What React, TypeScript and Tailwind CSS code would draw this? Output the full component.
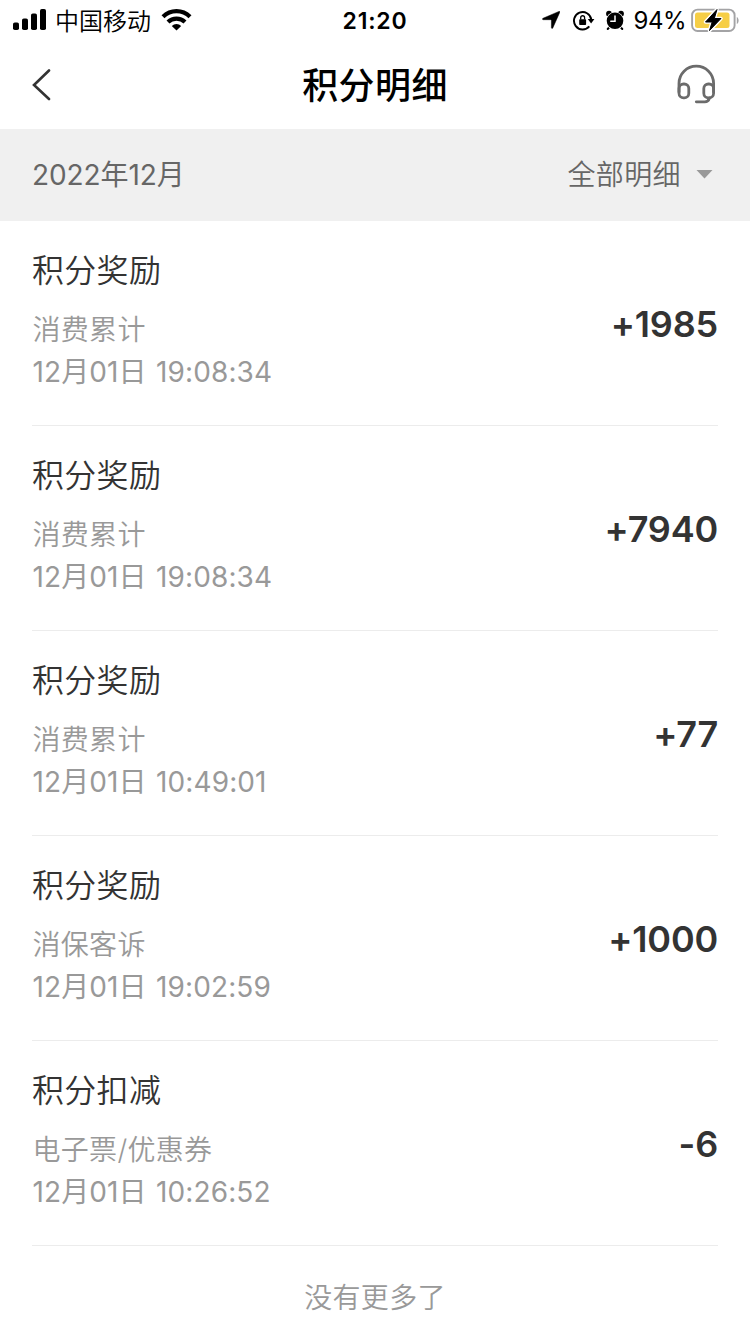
type Entry = {
  title: string;
  reason: string;
  time: string;
  amount: string;
};

const entries: Entry[] = [
  { title: '积分奖励', reason: '消费累计', time: '12月01日 19:08:34', amount: '+1985' },
  { title: '积分奖励', reason: '消费累计', time: '12月01日 19:08:34', amount: '+7940' },
  { title: '积分奖励', reason: '消费累计', time: '12月01日 10:49:01', amount: '+77' },
  { title: '积分奖励', reason: '消保客诉', time: '12月01日 19:02:59', amount: '+1000' },
  { title: '积分扣减', reason: '电子票/优惠券', time: '12月01日 10:26:52', amount: '-6' },
];

function SignalIcon() {
  return (
    <svg className="ml-[13px] h-[22px] w-[33px] shrink-0" viewBox="0 0 33 22">
      <rect x="0" y="13.5" width="6" height="7.5" rx="1.8" />
      <rect x="9" y="9.5" width="6" height="11.5" rx="1.8" />
      <rect x="18" y="4.5" width="6" height="16.5" rx="1.8" />
      <rect x="27" y="0" width="6" height="21" rx="1.8" />
    </svg>
  );
}

function WifiIcon() {
  return (
    <svg className="ml-[10px] h-[22px] w-[31px] shrink-0" viewBox="0 0 31 22" fill="none" stroke="#000">
      <path d="M2 7.700a19.300 19.300 0 0 1 27 0" strokeWidth="4.200" />
      <path d="M7 13a12.200 12.200 0 0 1 17 0" strokeWidth="4.200" />
      <path d="M10.800 17a6.800 6.800 0 0 1 9.400 0L15.500 21.500z" fill="#000" stroke="none" />
    </svg>
  );
}

function LocationIcon() {
  return (
    <svg className="h-[18px] w-[18px] shrink-0" viewBox="0 0 18 18">
      <path d="M17 .4c.7-.3 1.100.1.8.8L10.800 16.900c-.4.8-1.400.7-1.400-.3V9.300c0-.4-.2-.6-.6-.6H1.300C.3 8.700.2 7.700 1 7.300Z" stroke="#000" strokeWidth=".5" />
    </svg>
  );
}

function RotationLockIcon() {
  return (
    <svg className="ml-[13px] h-[21px] w-[22px] shrink-0" viewBox="0 0 22 21" fill="none">
      <path d="M18.300 9.500A8.700 8.700 0 1 0 16.300 16.400" stroke="#000" strokeWidth="1.900" />
      <path d="M14.800 9h6.600l-3.300 4.600z" fill="#000" />
      <rect x="6.200" y="9.200" width="6.900" height="5.800" rx=".8" fill="#000" />
      <path d="M7.700 9.400V7.700a1.950 1.950 0 0 1 3.900 0v1.700" stroke="#000" strokeWidth="1.300" />
    </svg>
  );
}

function AlarmIcon() {
  return (
    <svg className="ml-[10px] h-[21px] w-[20px] shrink-0" viewBox="0 0 20 21">
      <circle cx="4" cy="3.700" r="2.900" />
      <circle cx="16" cy="3.700" r="2.900" />
      <path d="m4.200 17.300-1.500 1.700M15.800 17.300l1.500 1.700" stroke="#000" strokeWidth="2" strokeLinecap="round" />
      <circle cx="10" cy="10.800" r="9" fill="#fff" />
      <circle cx="10" cy="10.800" r="8.300" />
      <path d="M10 6v5.200H5.800" fill="none" stroke="#fff" strokeWidth="1.500" strokeLinecap="round" />
    </svg>
  );
}

function BatteryIcon() {
  return (
    <svg className="ml-[5px] h-[27px] w-[49px] shrink-0" viewBox="0 0 49 27" fill="none">
      <rect x="1.100" y="2.600" width="42.500" height="21.400" rx="5.500" stroke="#a3a3a5" strokeWidth="1.900" />
      <path d="M45.800 10v7c2.400-1 2.400-6 0-7" fill="#a3a3a5" />
      <rect x="4" y="5.500" width="34.500" height="15.600" rx="2.500" fill="#f6ce46" />
      <path d="M26 2.500 14.500 15h6.700L18.500 23.500 30 11.500h-6.700z" fill="#000" stroke="#fff" strokeWidth="3.600" strokeLinejoin="round" />
      <path d="M26 2.500 14.500 15h6.700L18.500 23.500 30 11.500h-6.700z" fill="#000" stroke="#000" strokeWidth="1" strokeLinejoin="round" />
    </svg>
  );
}

function HeadsetIcon() {
  return (
    <svg className="mr-[1px] mb-[1px] h-[40px] w-[40px]" viewBox="0 0 40 40" fill="none" stroke="#6b6b6b" strokeWidth="2.800" strokeLinecap="round" strokeLinejoin="round">
      <path d="M2 28V19.500a17.300 17.300 0 0 1 34.600 0V28" />
      <rect x="2" y="20" width="9.800" height="13.800" rx="4.600" />
      <rect x="26.800" y="20" width="9.800" height="13.800" rx="4.600" />
      <path d="M32.500 34c-.8 2.700-2.300 3.800-4.700 3.800h-8.500" />
    </svg>
  );
}

function EntryRow({ entry }: { entry: Entry }) {
  return (
    <li className="flex h-[205px] items-center justify-between border-b border-[#ececec]">
      <div className="flex flex-col pb-[6px]">
        <h2 className="h-[48px] text-[32px] leading-[48px] font-[350] tracking-[0.3px] text-[#333]">{entry.title}</h2>
        <p className="mt-[14px] h-[42px] pl-[0.5px] text-[28px] leading-[43px] font-[350] tracking-[0.3px] text-[#999] [font-feature-settings:'calt'_0]">{entry.reason}</p>
        <p className="h-[42px] pl-[0.5px] text-[28px] leading-[42px] tracking-[0.1px] text-[#999] [word-spacing:1.500px]">{entry.time}</p>
      </div>
      <span className="pt-[1px] text-[36px] leading-[48px] font-semibold tracking-[-0.2px] text-[#333] [font-feature-settings:'calt'_0]">{entry.amount}</span>
    </li>
  );
}

export default function App() {
  return (
    <div className="flex h-[1334px] w-[750px] flex-col overflow-hidden bg-white font-['Inter','Noto_Sans_CJK_SC',sans-serif]">
      <div className="grid h-[40px] shrink-0 grid-cols-[1fr_auto_1fr] items-center text-black">
        <div className="flex items-center">
          <SignalIcon />
          <span className="ml-[9px] pt-[3px] text-[24px] leading-[37px] font-[350]">中国移动</span>
          <WifiIcon />
        </div>
        <time className="pt-[2px] text-[23px] leading-[38px] font-semibold tracking-[0.8px]">21:20</time>
        <div className="flex items-center justify-end pr-[10px]">
          <LocationIcon />
          <RotationLockIcon />
          <AlarmIcon />
          <span className="ml-[9px] pt-[2px] text-[24px] leading-[38px] tracking-[-0.5px]">94%</span>
          <BatteryIcon />
        </div>
      </div>

      <header className="grid h-[89px] shrink-0 grid-cols-[1fr_auto_1fr] items-center px-[32px]">
        <button aria-label="返回" className="flex justify-start">
          <svg className="h-[32px] w-[20px]" viewBox="0 0 20 32" fill="none" stroke="#333" strokeWidth="2.600" strokeLinecap="round">
            <path d="M17 1.500 2 16 17 30" />
          </svg>
        </button>
        <h1 className="pt-[3px] text-[36px] leading-[48px] font-medium tracking-[0.4px] text-black">积分明细</h1>
        <button aria-label="客服" className="flex justify-end">
          <HeadsetIcon />
        </button>
      </header>

      <div className="flex h-[92px] shrink-0 items-center justify-between bg-[#f0f0f0] pr-[37px] pl-[32px] text-[28px] leading-[42px] text-[#666]">
        <span className="tracking-[-0.1px]">2022年12月</span>
        <button className="flex items-center font-[350] tracking-[0.4px]">
          全部明细
          <svg className="mb-[2px] ml-[15px] h-[9px] w-[17px]" viewBox="0 0 17 9">
            <path d="M.5 0h16L8.500 8.500z" fill="#999" />
          </svg>
        </button>
      </div>

      <ul className="mx-[32px] flex flex-col">
        {entries.map((entry, index) => (
          <EntryRow key={index} entry={entry} />
        ))}
      </ul>
      <p className="pt-[31px] text-center text-[28px] leading-[42px] font-[350] tracking-[0.3px] text-[#999]">没有更多了</p>
    </div>
  );
}
